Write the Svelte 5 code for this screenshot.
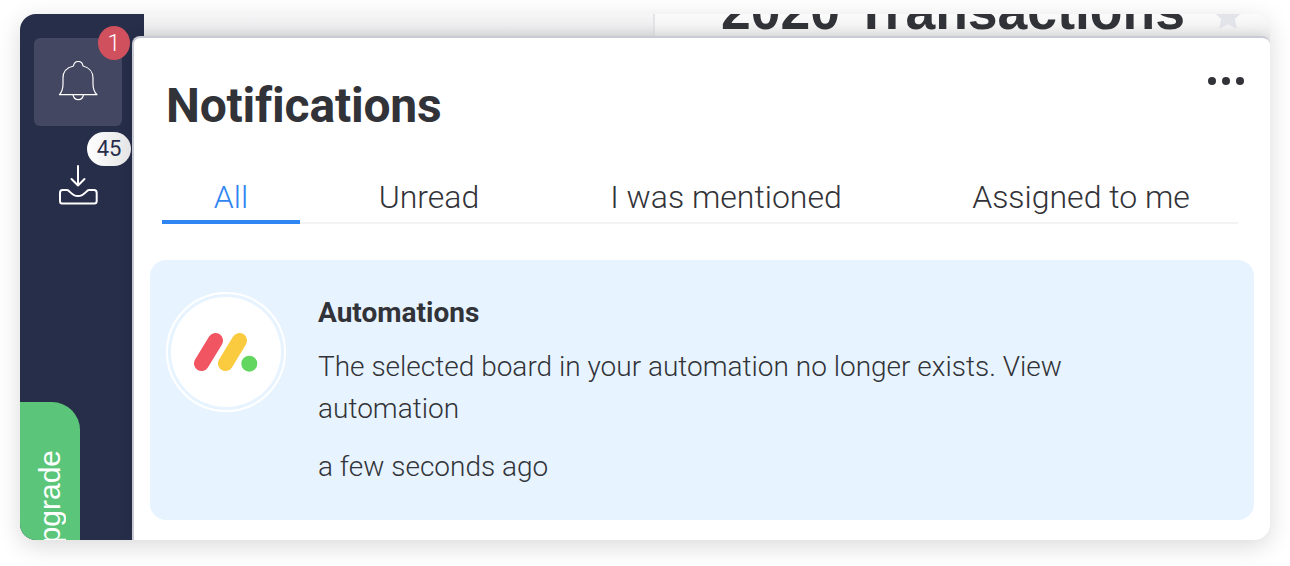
<script lang="ts">
	const tabs = [
		{ label: "All", selected: true },
		{ label: "Unread" },
		{ label: "I was mentioned" },
		{ label: "Assigned to me" }
	];
</script>

<div class="page">
	<div class="window">
		<aside class="sidebar">
			<div class="bell">
				<svg width="40" height="42" viewBox="58 61 40 42" fill="none" stroke="#fff" stroke-width="1.2" stroke-linejoin="round">
					<path d="M59.5 94.7H97C94 92 93 88 93 84V78C93 72 89 67.500 83 66C82.500 63 80.500 61.500 78.300 61.500C76 61.500 74 63 73.500 66C67 67.500 63 72 63 78V84C63 88 62 92 59.500 94.700Z"/>
					<path d="M73 94.700C73.500 98 75.500 99.700 78.300 99.700C81 99.700 83 98 83.500 94.700"/>
				</svg>
				<span class="badge red">1</span>
			</div>
			<div class="inbox">
				<svg width="40" height="42" viewBox="58 164 40 42" fill="none" stroke="#fff" stroke-width="2" stroke-linecap="round" stroke-linejoin="round">
					<path d="M78 166V185.500M71.500 179L78 185.500L84.500 179"/>
					<path d="M60 193C60 191 61 190 62.500 190H67C70 190 71 196 78 196S86 190 89 190H94C95.500 190 96.700 191 96.700 193V201C96.700 202.500 95.700 203.500 94.200 203.500H62C60.700 203.500 60 202.500 60 201Z"/>
				</svg>
				<span class="badge white">45</span>
			</div>
			<div class="upgrade"><span>Upgrade</span></div>
		</aside>

		<main class="board">
			<div class="strip">
				<div class="cell"></div>
				<div class="title">
					<span>2020 Transactions</span>
					<svg width="32" height="32" viewBox="0 0 24 24" fill="#e2e4ea"><path d="M12 1.500L15.200 8.200L22.500 9.200L17.200 14.300L18.500 21.600L12 18.100L5.500 21.600L6.800 14.300L1.500 9.200L8.800 8.200Z"/></svg>
				</div>
			</div>
		</main>

		<section class="panel">
			<button class="more" aria-label="More">
				<i></i><i></i><i></i>
			</button>
			<h1>Notifications</h1>
			<div class="tabs">
				{#each tabs as tab}
					<button class="tab" class:selected={tab.selected}>{tab.label}</button>
				{/each}
			</div>
			<article class="card">
				<div class="avatar">
					<div class="circle">
						<svg width="64" height="40" viewBox="194 332 64 40" fill="none" stroke-width="15" stroke-linecap="round">
							<path d="M201.500 363.500L215.500 340.500" stroke="#f25562"/>
							<path d="M225.500 363.500L239.500 340.500" stroke="#fbcb3f"/>
							<circle cx="249.300" cy="363.700" r="8" fill="#62d65e"/>
						</svg>
					</div>
				</div>
				<div class="body">
					<h2>Automations</h2>
					<p>The selected board in your automation no longer exists. View automation</p>
					<time>a few seconds ago</time>
				</div>
			</article>
		</section>
	</div>
</div>

<style>
	:global(body) {
		background: #fff;
		font-family: Roboto, sans-serif;
		overflow: hidden;
	}

	.page {
		width: 1290px;
		height: 566px;
		padding: 14px 20px 26px;
		box-sizing: border-box;
	}

	.window {
		position: relative;
		display: flex;
		height: 526px;
		border-radius: 16px;
		overflow: hidden;
		box-shadow: 0 6px 24px rgba(0, 0, 0, 0.15);
	}

	.sidebar {
		position: relative;
		flex: 0 0 124px;
		background: #272e4a;
		padding-top: 24px;
		box-sizing: border-box;
	}

	.bell {
		position: relative;
		display: flex;
		align-items: center;
		justify-content: center;
		width: 88px;
		height: 88px;
		margin-left: 14px;
		background: #444761;
		border-radius: 6px;
		z-index: 3;
	}

	.inbox {
		position: relative;
		display: flex;
		justify-content: center;
		width: 88px;
		margin: 38px 0 0 14px;
		z-index: 3;
	}

	.inbox svg {
		display: block;
	}

	.badge {
		position: absolute;
		display: flex;
		align-items: center;
		justify-content: center;
	}

	.red {
		top: -12px;
		right: -8px;
		width: 32px;
		height: 34px;
		border-radius: 50%;
		background: #d1505e;
		color: #fff;
		font-size: 23px;
		font-weight: 300;
	}

	.white {
		top: -32px;
		right: -9px;
		width: 44px;
		height: 34px;
		padding-bottom: 2px;
		box-sizing: border-box;
		border-radius: 17px;
		background: linear-gradient(90deg, #fff, #e4e4e6);
		color: #272e4a;
		font-size: 22px;
	}

	.upgrade {
		position: absolute;
		left: 0;
		bottom: 0;
		display: flex;
		justify-content: center;
		align-items: flex-start;
		width: 60px;
		height: 138px;
		padding-top: 48px;
		box-sizing: border-box;
		background: #5bc679;
		border-radius: 0 28px 0 0;
		overflow: hidden;
	}

	.upgrade span {
		flex: none;
		writing-mode: vertical-rl;
		transform: rotate(180deg);
		white-space: nowrap;
		color: #fff;
		font-size: 30px;
		font-family: "Liberation Sans", sans-serif;
		line-height: 60px;
	}

	.board {
		flex: 1;
		background: #f0f0f1;
	}

	.strip {
		display: flex;
		height: 22px;
		overflow: hidden;
	}

	.cell {
		width: 509px;
		border-right: 2px solid #e2e3e6;
		background: linear-gradient(#f6f6f7, #e6e6e8);
	}

	.title {
		display: flex;
		align-items: flex-start;
		gap: 27px;
		flex: 1;
		padding-left: 66px;
		background: linear-gradient(#fbfbfb, #eeeef0);
	}

	.title span {
		flex: none;
		margin-top: -30px;
		font-family: "Liberation Sans", sans-serif;
		font-size: 53.5px;
		font-weight: 700;
		line-height: 53px;
		color: #323338;
	}

	.title svg {
		flex: none;
		margin-top: -14px;
	}

	.panel {
		position: absolute;
		top: 22px;
		left: 112px;
		right: 0;
		bottom: 0;
		background: #fff;
		border-radius: 8px 8px 0 0;
		border-top: 2px solid #c9cbd4;
		border-left: 2px solid #c9cbd4;
		box-shadow: 0 0 14px rgba(0, 0, 0, 0.15);
		box-sizing: border-box;
		padding: 0 16px;
		z-index: 2;
	}

	.more {
		position: absolute;
		top: 39px;
		right: 26px;
		display: flex;
		gap: 6px;
		padding: 0;
		border: none;
		background: none;
	}

	.more i {
		width: 8px;
		height: 8px;
		border-radius: 50%;
		background: #323338;
	}

	h1 {
		margin: 40px 0 0 16px;
		font-size: 48px;
		line-height: 56px;
		font-weight: 700;
		color: #323338;
		letter-spacing: -0.2px;
	}

	.tabs {
		display: grid;
		grid-template-columns: 138px 258px 336px 1fr;
		margin: 38px 16px 0 12px;
		border-bottom: 2px solid #f2f3f5;
	}

	.tab {
		height: 52px;
		padding: 2px 0 0;
		border: none;
		background: none;
		font-family: Roboto, sans-serif;
		font-size: 32px;
		font-weight: 300;
		color: #323338;
		margin-bottom: -2px;
		border-bottom: 4px solid transparent;
	}

	.tab:last-child {
		padding-left: 30px;
	}

	.tab.selected {
		color: #2f86f2;
		border-bottom-color: #2f86f2;
	}

	.card {
		display: flex;
		margin-top: 36px;
		height: 260px;
		background: #e7f4ff;
		border-radius: 16px;
		padding: 32px 0 0 16px;
		box-sizing: border-box;
	}

	.avatar {
		flex: 0 0 120px;
		height: 120px;
		border-radius: 50%;
		border: 2px solid #fff;
		box-sizing: border-box;
		padding: 3px;
	}

	.circle {
		display: flex;
		align-items: center;
		justify-content: center;
		height: 100%;
		border-radius: 50%;
		background: #fff;
	}

	.body {
		margin-left: 32px;
		color: #323338;
		max-width: 760px;
	}

	h2 {
		margin: 3px 0 0;
		font-size: 28px;
		line-height: 36px;
		font-weight: 700;
	}

	p {
		margin: 15px 0 0;
		font-size: 28px;
		line-height: 42px;
		font-weight: 300;
	}

	time {
		display: block;
		margin-top: 16px;
		font-size: 28px;
		line-height: 42px;
		font-weight: 300;
	}
</style>
